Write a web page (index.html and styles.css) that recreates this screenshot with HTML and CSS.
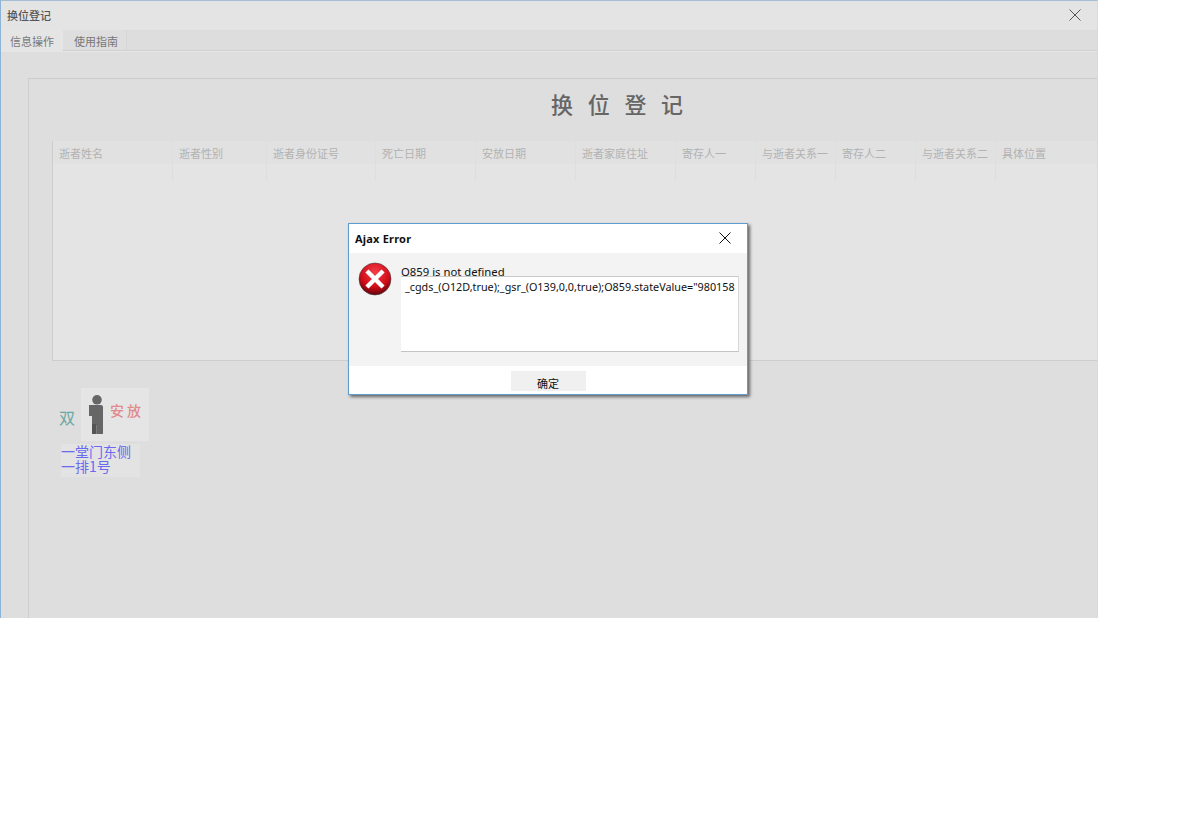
FILE: index.html
```html
<!DOCTYPE html>
<html lang="zh">
<head>
<meta charset="utf-8">
<title>换位登记</title>
<link rel="stylesheet" href="styles.css">
</head>
<body>
<div class="window">
  <header class="titlebar">
    <span class="wintitle">换位登记</span>
    <svg class="winclose" width="12" height="12" viewBox="0 0 12 12"><path d="M.5.5l11 11M11.5.5l-11 11" stroke="#555" stroke-width="1" fill="none"/></svg>
  </header>
  <nav class="tabs">
    <span class="tab tab-on">信息操作</span>
    <span class="tab">使用指南</span>
  </nav>
  <main class="content">
    <section class="panel">
      <h1 class="heading">换位登记</h1>
      <div class="grid">
        <div class="grid-head">
          <span class="col c1">逝者姓名</span>
          <span class="col c2">逝者性别</span>
          <span class="col c3">逝者身份证号</span>
          <span class="col c4">死亡日期</span>
          <span class="col c4">安放日期</span>
          <span class="col c4">逝者家庭住址</span>
          <span class="col c5">寄存人一</span>
          <span class="col c5">与逝者关系一</span>
          <span class="col c5">寄存人二</span>
          <span class="col c5">与逝者关系二</span>
          <span class="col c6">具体位置</span>
        </div>
        <div class="grid-body">
          <span class="col c1"></span>
          <span class="col c2"></span>
          <span class="col c3"></span>
          <span class="col c4"></span>
          <span class="col c4"></span>
          <span class="col c4"></span>
          <span class="col c5"></span>
          <span class="col c5"></span>
          <span class="col c5"></span>
          <span class="col c5"></span>
          <span class="col c6"></span>
        </div>
      </div>
      <div class="seat">
        <div class="seat-top">
          <span class="seat-type">双</span>
          <div class="badge">
            <svg class="person" width="16" height="41" viewBox="0 0 16 41"><circle cx="9" cy="4.800" r="4.800" fill="#666"/><path d="M1 10H13q2 0 2 2v27H8.500V30H4V21H1z" fill="#666"/><rect x="4" y="29" width="4.500" height="10" rx=".5" fill="#555"/></svg>
            <span class="badge-text">安放</span>
          </div>
        </div>
        <div class="seat-place">一堂门东侧<br>一排1号</div>
      </div>
    </section>
  </main>
</div>

<div class="dialog">
  <div class="dlg-title">
    <span class="dlg-name">Ajax Error</span>
    <svg class="dlg-close" width="12" height="12" viewBox="0 0 12 12"><path d="M.5.5l11 11M11.5.5l-11 11" stroke="#111" stroke-width="1" fill="none"/></svg>
  </div>
  <div class="dlg-body">
    <svg class="dlg-icon" width="34" height="34" viewBox="0 0 34 34">
      <defs><radialGradient id="red" cx="50%" cy="30%" r="70%"><stop offset="0" stop-color="#f4404a"/><stop offset=".65" stop-color="#d00c18"/><stop offset="1" stop-color="#60040a"/></radialGradient></defs>
      <circle cx="17" cy="17" r="16" fill="url(#red)" stroke="#444" stroke-width=".6"/>
      <path d="M10.500 10.500l13 13M23.500 10.500l-13 13" stroke="#fff" stroke-width="4.400" stroke-linecap="square"/>
    </svg>
    <div class="dlg-main">
      <div class="dlg-msg">O859 is not defined</div>
      <div class="dlg-detail">_cgds_(O12D,true);_gsr_(O139,0,0,true);O859.stateValue="980158</div>
    </div>
  </div>
  <div class="dlg-foot"><button class="dlg-ok">确定</button></div>
</div>
</body>
</html>
```
FILE: styles.css
```css
* { box-sizing: border-box; }
html, body { margin: 0; padding: 0; background: #fff; }
body {
  height: 827px;
  overflow: hidden;
  font-family: "Noto Sans CJK SC", sans-serif;
  font-size: 12px;
}
.window {
  width: 1098px;
  height: 618px;
  display: flex;
  flex-direction: column;
  border-top: 1px solid #a4bed6;
  border-left: 1px solid #8db3d6;
  border-right: 1px solid #d3dbe3;
  background: #dedede;
  overflow: hidden;
}
.titlebar {
  height: 29px;
  flex: none;
  background: #e4e4e4;
  display: flex;
  align-items: center;
  justify-content: space-between;
  padding: 0 16px 1px 6px;
}
.wintitle { font-size: 11px; font-weight: 500; color: #555; line-height: 1; }
.winclose { display: block; margin-bottom: 1px; }
.tabs {
  height: 21px;
  flex: none;
  display: flex;
  background: #dddddd;
  border-bottom: 1px solid #d0d0d0;
  box-shadow: 0 1px 0 #e6e6e6;
}
.tab {
  width: 64px;
  height: 20px;
  padding: 2px 0 0 3px;
  text-align: center;
  font-size: 11px;
  line-height: 19px;
  color: #777;
  background: #dedede;
  border-right: 1px solid #d6d6d6;
}
.tab-on { width: 62px; background: #e5e5e5; height: 21px; padding-left: 0; border-right: 0; position: relative; }
.content { flex: 1; min-height: 0; padding: 27px 0 0 27px; }
.panel {
  height: 100%;
  border-top: 1px solid #cbcbcb;
  border-left: 1px solid #cecece;
  padding: 0 0 0 23px;
}
.heading {
  margin: 0;
  height: 62px;
  padding-top: 9px;
  padding-left: 499px;
  font-size: 22px;
  font-weight: 500;
  letter-spacing: 14.700px;
  line-height: 30px;
  color: #666;
  white-space: nowrap;
}
.grid {
  height: 220px;
  display: flex;
  flex-direction: column;
  background: #e4e4e4;
  border-left: 1px solid #cdcdcd;
  border-bottom: 1px solid #cdcdcd;
}
.grid-head {
  height: 23px;
  flex: none;
  display: flex;
  background: #e1e1e1;
}
.grid-head .col { padding-top: 1px; }
.grid-body { flex: 1; display: flex; align-items: flex-start; }
.grid-body .col { height: 17px; }
.col {
  flex: none;
  padding-left: 6px;
  font-size: 11px;
  line-height: 23px;
  color: #b2b2b2;
  border-right: 1px solid #dedede;
  white-space: nowrap;
}
.c1 { width: 120px; }
.c2 { width: 94px; }
.c3 { width: 109px; }
.c4 { width: 100px; }
.c5 { width: 80px; }
.c6 { width: 102px; border-right: 0; }
.seat { margin-top: 27px; margin-left: 6px; }
.seat-top { display: flex; align-items: center; }
.seat-type { font-size: 16px; line-height: 20px; color: #68a8a2; width: 23px; margin-top: 4px; padding-left: 1px; }
.badge {
  width: 68px;
  height: 53px;
  background: #e5e5e5;
  display: flex;
  align-items: center;
  padding-left: 7px;
  gap: 6px;
}
.person { display: block; filter: blur(.4px); margin-top: 1px; }
.badge-text { font-size: 14px; font-weight: 500; letter-spacing: 3px; color: #e08b8b; line-height: 1; margin-top: -10px; white-space: nowrap; }
.seat-place {
  width: 79px;
  height: 33px;
  margin: 3px 0 0 3px;
  background: #e3e3e3;
  font-size: 14px;
  line-height: 15px;
  color: #6a6af0;
  white-space: nowrap;
}
.dialog {
  position: absolute;
  left: 348px;
  top: 223px;
  width: 400px;
  height: 172px;
  display: flex;
  flex-direction: column;
  background: #fff;
  border: 1px solid #5f9ccf;
  box-shadow: 2px 2px 3px #666;
}
.dlg-title {
  height: 29px;
  flex: none;
  display: flex;
  align-items: center;
  justify-content: space-between;
  padding: 0 16px 0 6px;
}
.dlg-name { font-family: "Noto Sans", sans-serif; font-size: 11px; font-weight: 700; letter-spacing: .2px; color: #111; }
.dlg-close { display: block; margin-top: -1px; }
.dlg-body {
  height: 113px;
  flex: none;
  background: #f3f3f3;
  display: flex;
  padding: 9px 8px 0 9px;
}
.dlg-icon { display: block; flex: none; margin-right: 9px; }
.dlg-main { flex: 1; min-width: 0; }
.dlg-msg { font-family: "Noto Sans", sans-serif; font-size: 11.300px; line-height: 14px; height: 11px; margin-top: 3px; color: #111; white-space: nowrap; }
.dlg-detail {
  position: relative;
  height: 76px;
  background: #fff;
  border-top: 1px solid #c9c9c9;
  border-bottom: 1px solid #c4c4c4;
  border-right: 1px solid #d8d8d8;
  padding: 2px 3px 0 4px;
  font-family: "Noto Sans", sans-serif;
  font-size: 10.800px;
  line-height: 16px;
  color: #111;
  white-space: nowrap;
  overflow: hidden;
}
.dlg-foot { flex: 1; display: flex; justify-content: center; padding-top: 5px; }
.dlg-ok {
  width: 75px;
  height: 20px;
  border: 0;
  padding: 3px 0 0;
  background: #f0f0f0;
  font-family: "Noto Sans CJK SC", sans-serif;
  font-size: 11px;
  line-height: 16px;
  color: #111;
}
```
